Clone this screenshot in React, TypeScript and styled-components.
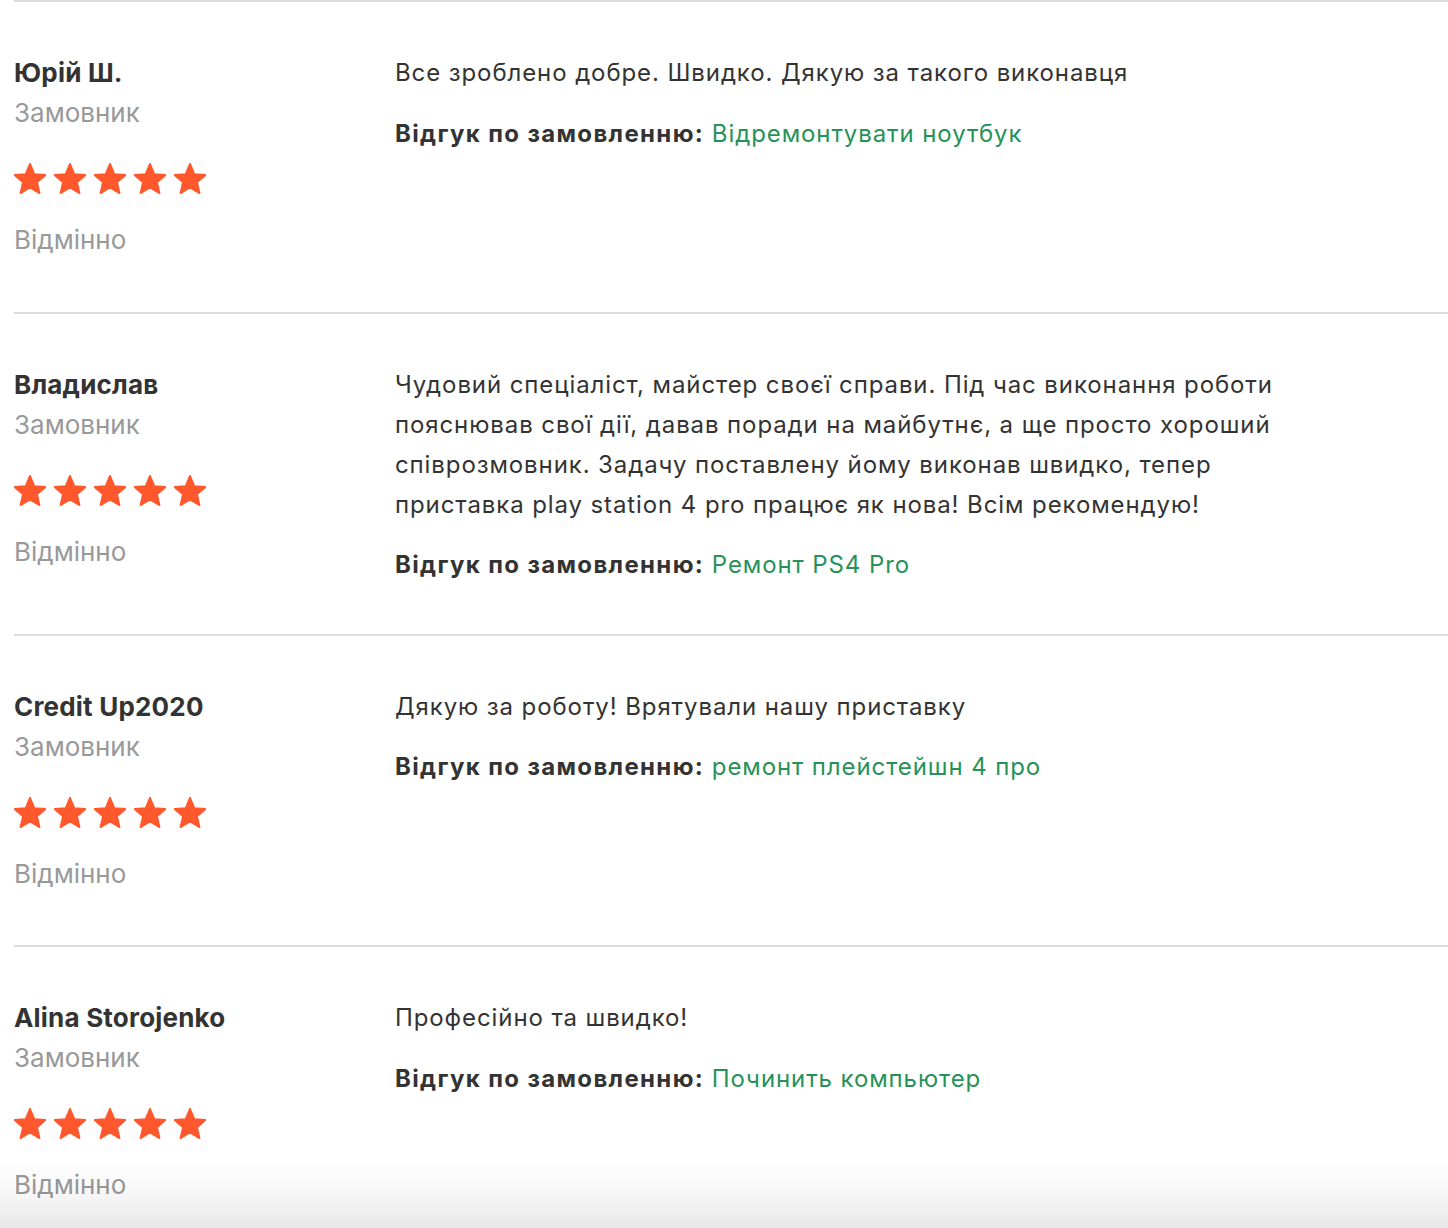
import React from "react";
import styled, { createGlobalStyle } from "styled-components";

const GlobalStyle = createGlobalStyle`
  html, body {
    margin: 0;
    padding: 0;
    background: #ffffff;
  }
  body {
    font-family: Inter, Roboto, "Liberation Sans", sans-serif;
    color: #333333;
  }
`;

const Page = styled.div`
  padding-left: 14px;
  overflow: hidden;
`;

const List = styled.div`
  display: flex;
  flex-direction: column;
`;

const Review = styled.article`
  display: grid;
  grid-template-columns: 381px minmax(0, 900px);
  border-top: 2px solid #dcdce0;
  padding: 51px 0 51.5px;
`;

const Author = styled.div`
  display: flex;
  flex-direction: column;
  font-family: Inter, "Open Sans", sans-serif;
`;

const Name = styled.div`
  font-size: 26px;
  font-weight: 700;
  line-height: 40px;
  color: #333333;
  letter-spacing: 0.2px;
`;

const Role = styled.div`
  font-size: 26px;
  line-height: 40px;
  color: #999999;
`;

const Stars = styled.div`
  display: flex;
  gap: 8px;
  margin-top: 30px;
  height: 31px;
`;

const Verdict = styled.div`
  font-size: 26px;
  line-height: 40px;
  color: #999999;
  margin-top: 26px;
`;

const Body = styled.div`
  display: flex;
  flex-direction: column;
`;

const Text = styled.p`
  margin: 0;
  font-size: 24px;
  line-height: 40px;
  letter-spacing: 0.9px;
  color: #333333;
`;

const OrderLine = styled.div`
  margin-top: 23.5px;
  font-size: 24px;
  line-height: 34px;
  letter-spacing: 0.9px;
  color: #333333;
`;

const OrderLabel = styled.span`
  font-weight: 700;
  letter-spacing: 1.35px;
`;

const OrderLink = styled.a`
  color: #26925a;
  text-decoration: none;
`;

const BottomFade = styled.div`
  position: fixed;
  left: 0;
  right: 0;
  bottom: 0;
  height: 72px;
  pointer-events: none;
  background: linear-gradient(
    to bottom,
    rgba(0, 0, 0, 0) 0%,
    rgba(0, 0, 0, 0.02) 40%,
    rgba(0, 0, 0, 0.09) 100%
  );
`;

const Star = () => (
  <svg width="32" height="31" viewBox="1.6 1.6 20.8 19.8" aria-hidden="true">
    <path
      d="M12 17.27L18.18 21l-1.64-7.03L22 9.24l-7.19-.61L12 2 9.19 8.63 2 9.24l5.46 4.73L5.82 21z"
      fill="#ff582d"
      stroke="#ff582d"
      strokeWidth="1.2"
      strokeLinejoin="round"
    />
  </svg>
);

type ReviewData = {
  name: string;
  text: string;
  order: string;
};

const reviews: ReviewData[] = [
  {
    name: "Юрій Ш.",
    text: "Все зроблено добре. Швидко. Дякую за такого виконавця",
    order: "Відремонтувати ноутбук",
  },
  {
    name: "Владислав",
    text:
      "Чудовий спеціаліст, майстер своєї справи. Під час виконання роботи пояснював свої дії, давав поради на майбутнє, а ще просто хороший співрозмовник. Задачу поставлену йому виконав швидко, тепер приставка play station 4 pro працює як нова! Всім рекомендую!",
    order: "Ремонт PS4 Pro",
  },
  {
    name: "Credit Up2020",
    text: "Дякую за роботу! Врятували нашу приставку",
    order: "ремонт плейстейшн 4 про",
  },
  {
    name: "Alina Storojenko",
    text: "Професійно та швидко!",
    order: "Починить компьютер",
  },
];

export default function App() {
  return (
    <>
      <GlobalStyle />
      <Page>
        <List>
          {reviews.map((r) => (
            <Review key={r.name}>
              <Author>
                <Name>{r.name}</Name>
                <Role>Замовник</Role>
                <Stars>
                  {[0, 1, 2, 3, 4].map((i) => (
                    <Star key={i} />
                  ))}
                </Stars>
                <Verdict>Відмінно</Verdict>
              </Author>
              <Body>
                <Text>{r.text}</Text>
                <OrderLine>
                  <OrderLabel>Відгук по замовленню:</OrderLabel>{" "}
                  <OrderLink href="#">{r.order}</OrderLink>
                </OrderLine>
              </Body>
            </Review>
          ))}
        </List>
      </Page>
      <BottomFade />
    </>
  );
}
